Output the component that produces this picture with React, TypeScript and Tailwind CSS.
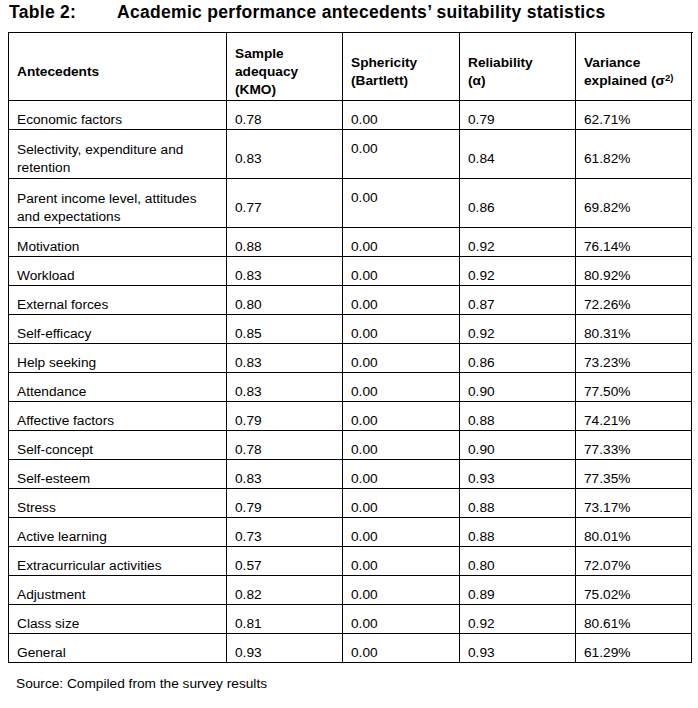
import React from "react";

type Row = {
  name: React.ReactNode;
  kmo: string;
  bart: string;
  rel: string;
  varx: string;
  h: string;
};

const single = (name: string, kmo: string, rel: string, varx: string): Row => ({
  name,
  kmo,
  bart: "0.00",
  rel,
  varx,
  h: "h-[29px]",
});

const rows: Row[] = [
  single("Economic factors", "0.78", "0.79", "62.71%"),
  {
    name: (
      <>
        Selectivity, expenditure and
        <br />
        retention
      </>
    ),
    kmo: "0.83",
    bart: "0.00",
    rel: "0.84",
    varx: "61.82%",
    h: "h-[49px]",
  },
  {
    name: (
      <>
        Parent income level, attitudes
        <br />
        and expectations
      </>
    ),
    kmo: "0.77",
    bart: "0.00",
    rel: "0.86",
    varx: "69.82%",
    h: "h-[49px]",
  },
  single("Motivation", "0.88", "0.92", "76.14%"),
  single("Workload", "0.83", "0.92", "80.92%"),
  single("External forces", "0.80", "0.87", "72.26%"),
  single("Self-efficacy", "0.85", "0.92", "80.31%"),
  single("Help seeking", "0.83", "0.86", "73.23%"),
  single("Attendance", "0.83", "0.90", "77.50%"),
  single("Affective factors", "0.79", "0.88", "74.21%"),
  single("Self-concept", "0.78", "0.90", "77.33%"),
  single("Self-esteem", "0.83", "0.93", "77.35%"),
  single("Stress", "0.79", "0.88", "73.17%"),
  single("Active learning", "0.73", "0.88", "80.01%"),
  single("Extracurricular activities", "0.57", "0.80", "72.07%"),
  single("Adjustment", "0.82", "0.89", "75.02%"),
  single("Class size", "0.81", "0.92", "80.61%"),
  single("General", "0.93", "0.93", "61.29%"),
];

const cellBase =
  "box-border border-r border-b border-black pl-[8px] pr-[4px] pt-[10px] flex flex-col";

export default function App() {
  return (
    <div
      className="w-[698px] h-[708px] bg-white text-black text-[13.7px] leading-[18px]"
      style={{ fontFamily: '"Liberation Sans", Arial, sans-serif' }}
    >
      <div className="flex pl-[9px] pt-[2px] font-bold text-[17.5px] leading-[20px] tracking-[0.3px]">
        <span className="w-[108px]">Table 2:</span>
        <span>Academic performance antecedents’ suitability statistics</span>
      </div>

      <div className="ml-[8px] mt-[10px] w-[685px] border-l border-t border-black grid grid-cols-[218px_116px_117px_116px_116px]">
        {/* header */}
        <div className={`${cellBase} h-[68px] justify-center font-bold`}>Antecedents</div>
        <div className={`${cellBase} h-[68px] justify-center font-bold`}>
          Sample
          <br />
          adequacy
          <br />
          (KMO)
        </div>
        <div className={`${cellBase} h-[68px] justify-center font-bold`}>
          Sphericity
          <br />
          (Bartlett)
        </div>
        <div className={`${cellBase} h-[68px] justify-center font-bold`}>
          Reliability
          <br />
          (α)
        </div>
        <div className={`${cellBase} h-[68px] justify-center font-bold`}>
          Variance
          <br />
          <span>
            explained (σ
            <span className="text-[9.5px] relative -top-[4px] align-baseline leading-none">2)</span>
          </span>
        </div>

        {rows.map((r, i) => (
          <React.Fragment key={i}>
            <div className={`${cellBase} ${r.h} justify-center`}>
              <div>{r.name}</div>
            </div>
            <div className={`${cellBase} ${r.h} justify-center`}>{r.kmo}</div>
            <div className={`${cellBase} ${r.h} justify-start`}>{r.bart}</div>
            <div className={`${cellBase} ${r.h} justify-center`}>{r.rel}</div>
            <div className={`${cellBase} ${r.h} justify-center`}>{r.varx}</div>
          </React.Fragment>
        ))}
      </div>

      <div className="pl-[16px] mt-[12px]">Source: Compiled from the survey results</div>
    </div>
  );
}
